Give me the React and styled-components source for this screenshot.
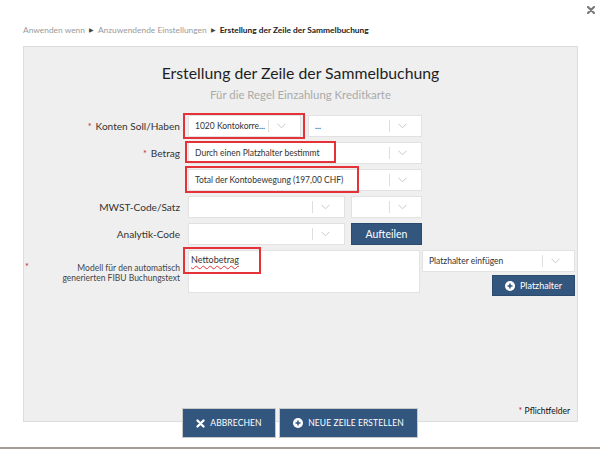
import React from "react";
import styled, { createGlobalStyle } from "styled-components";

const GlobalStyle = createGlobalStyle`
  html, body {
    margin: 0;
    padding: 0;
    background: #fff;
    font-family: Lato, "Open Sans", Arial, sans-serif;
    color: #333;
  }
  * { box-sizing: border-box; }
`;

const Page = styled.div`
  width: 600px;
  height: 449px;
  overflow: hidden;
  display: flex;
  flex-direction: column;
`;

const TopBar = styled.div`
  height: 20px;
  display: flex;
  justify-content: flex-end;
  align-items: center;
  padding-right: 5px;
`;

const Breadcrumb = styled.div`
  height: 20px;
  display: flex;
  align-items: center;
  gap: 4px;
  padding-left: 23px;
  font-size: 8.4px;
  color: #9a9a9a;
`;

const Crumb = styled.span`
  color: ${(p) => (p.$active ? "#222" : "#9a9a9a")};
  font-weight: ${(p) => (p.$active ? 700 : 400)};
`;

const Arrow = styled.span`
  color: #444;
  font-size: 5.5px;
`;

const Panel = styled.div`
  margin: 6px 22px 0 23px;
  height: 376px;
  background: #efefef;
  border: 1px solid #dcdcdc;
  display: flex;
  flex-direction: column;
`;

const Title = styled.h1`
  margin: 15px 0 0;
  font-size: 15.8px;
  line-height: 22px;
  font-weight: 400;
  color: #1e1e1e;
  text-align: center;
`;

const Subtitle = styled.div`
  margin-top: 3px;
  font-size: 11.4px;
  line-height: 16px;
  color: #aaa;
  text-align: center;
`;

const Form = styled.div`
  margin-top: 12px;
  display: grid;
  grid-template-columns: 164px 234px 153px;
  column-gap: 0;
  row-gap: 5px;
`;

const Label = styled.div`
  padding-right: 8px;
  display: flex;
  align-items: center;
  justify-content: flex-end;
  font-size: 10.1px;
  color: #333;
  gap: 4px;
`;

const SmallLabel = styled.div`
  position: relative;
  padding-right: 8px;
  display: flex;
  align-items: center;
  justify-content: flex-end;
  text-align: right;
  font-size: 8.5px;
  line-height: 10px;
  color: #444;
`;

const LeftStar = styled.span`
  position: absolute;
  left: 1px;
  top: 12px;
  color: #c0262d;
  font-size: 9px;
`;

const Star = styled.span`
  color: #c0262d;
  font-size: 9px;
`;

const Field = styled.div`
  position: relative;
  display: flex;
  gap: ${(p) => p.$gap || 0}px;
`;

const SelectBox = styled.div`
  width: ${(p) => (p.$w ? `${p.$w}px` : "100%")};
  height: 22px;
  background: #fff;
  border: 1px solid #e2e2e2;
  display: flex;
  align-items: center;
  font-size: 8.5px;
  color: #333;
`;

const SelectText = styled.span`
  flex: 1;
  padding-left: 6px;
  white-space: nowrap;
  overflow: hidden;
`;

const Indicator = styled.span`
  width: 32px;
  height: 100%;
  display: flex;
  align-items: center;
  gap: 8px;
`;

const Sep = styled.span`
  width: 1px;
  height: 12px;
  background: #dedede;
`;

const Annot = styled.span`
  position: absolute;
  left: ${(p) => p.$l}px;
  top: ${(p) => p.$t}px;
  width: ${(p) => p.$w}px;
  height: ${(p) => p.$h}px;
  border: 2px solid #e53238;
  pointer-events: none;
`;

const BlueButton = styled.button`
  height: ${(p) => p.$h || 22}px;
  width: ${(p) => (p.$w ? `${p.$w}px` : "auto")};
  background: #33567f;
  color: #fff;
  border: 1px solid #2b4a6e;
  font-family: inherit;
  font-size: ${(p) => p.$fs || 10.5}px;
  display: flex;
  align-items: center;
  justify-content: center;
  gap: 5px;
  padding: 0;
`;

const TextArea = styled.div`
  position: relative;
  width: 232px;
  height: 43px;
  background: #fff;
  border: 1px solid #e2e2e2;
  padding: 3px 2px;
  font-size: 9px;
`;

const Squiggle = styled.span`
  text-decoration: underline wavy #e53238;
  text-decoration-thickness: 1px;
  text-underline-offset: 2px;
`;

const SideColumn = styled.div`
  display: flex;
  flex-direction: column;
  align-items: flex-end;
  gap: 3px;
`;

const Required = styled.div`
  margin-top: auto;
  padding: 0 7px 5px 0;
  text-align: right;
  font-size: 8.5px;
  color: #111;
`;

const Footer = styled.div`
  margin-top: -14px;
  display: flex;
  justify-content: center;
  gap: 3px;
`;

const FooterButton = styled.button`
  height: 30px;
  width: ${(p) => p.$w}px;
  background: #33567f;
  color: #fff;
  border: 1px solid #c9c9c9;
  font-family: inherit;
  font-size: 8.5px;
  letter-spacing: 0.1px;
  display: flex;
  align-items: center;
  justify-content: center;
  gap: 5px;
  padding: 0;
`;

const BottomEdge = styled.div`
  margin-top: 9px;
  height: 2px;
  background: #a59d96;
`;

const Chevron = () => (
  <svg width="9" height="6" viewBox="0 0 9 6">
    <polyline points="0.5,0.8 4.5,4.8 8.5,0.8" fill="none" stroke="#c8c8c8" strokeWidth="1" />
  </svg>
);

const CloseIcon = () => (
  <svg width="8" height="8" viewBox="0 0 8 8">
    <path d="M1 1 L7 7 M7 1 L1 7" stroke="#7a7a7a" strokeWidth="2.2" strokeLinecap="round" />
  </svg>
);

const PlusCircle = ({ size = 11, color = "#33567f" }) => (
  <svg width={size} height={size} viewBox="0 0 12 12">
    <circle cx="6" cy="6" r="6" fill="#fff" />
    <path d="M6 3 V9 M3 6 H9" stroke={color} strokeWidth="1.8" />
  </svg>
);

const XIcon = () => (
  <svg width="9" height="9" viewBox="0 0 9 9">
    <path d="M1.5 1.5 L7.5 7.5 M7.5 1.5 L1.5 7.5" stroke="#fff" strokeWidth="2.3" strokeLinecap="round" />
  </svg>
);

const Select = ({ w, children }) => (
  <SelectBox $w={w}>
    <SelectText>{children}</SelectText>
    <Indicator>
      <Sep />
      <Chevron />
    </Indicator>
  </SelectBox>
);

export default function App() {
  return (
    <Page>
      <GlobalStyle />
      <TopBar>
        <CloseIcon />
      </TopBar>
      <Breadcrumb>
        <Crumb>Anwenden wenn</Crumb>
        <Arrow>▶</Arrow>
        <Crumb>Anzuwendende Einstellungen</Crumb>
        <Arrow>▶</Arrow>
        <Crumb $active>Erstellung der Zeile der Sammelbuchung</Crumb>
      </Breadcrumb>
      <Panel>
        <Title>Erstellung der Zeile der Sammelbuchung</Title>
        <Subtitle>Für die Regel Einzahlung Kreditkarte</Subtitle>
        <Form>
          <Label>
            <Star>*</Star>Konten Soll/Haben
          </Label>
          <Field $gap={7}>
            <Select w={113}>1020 Kontokorre...</Select>
            <Select w={114}>...</Select>
            <Annot $l={-5} $t={-2} $w={122} $h={26} />
          </Field>
          <div />

          <Label>
            <Star>*</Star>Betrag
          </Label>
          <Field>
            <Select>Durch einen Platzhalter bestimmt</Select>
            <Annot $l={-3} $t={-1} $w={151} $h={22} />
          </Field>
          <div />

          <Label />
          <Field>
            <Select>Total der Kontobewegung (197,00 CHF)</Select>
            <Annot $l={-3} $t={-3} $w={174} $h={27} />
          </Field>
          <div />

          <Label>MWST-Code/Satz</Label>
          <Field $gap={6}>
            <Select w={157} />
            <Select w={71} />
          </Field>
          <div />

          <Label>Analytik-Code</Label>
          <Field $gap={6}>
            <Select w={157} />
            <BlueButton $w={71}>Aufteilen</BlueButton>
          </Field>
          <div />

          <SmallLabel>
            <LeftStar>*</LeftStar>
            Modell für den automatisch
            <br />
            generierten FIBU Buchungstext
          </SmallLabel>
          <Field>
            <TextArea>
              <Squiggle>Nettobetrag</Squiggle>
            </TextArea>
            <Annot $l={-5} $t={-3} $w={78} $h={27} />
          </Field>
          <SideColumn>
            <Select>Platzhalter einfügen</Select>
            <BlueButton $w={83} $h={21} $fs={9}>
              <PlusCircle size={10} />
              Platzhalter
            </BlueButton>
          </SideColumn>
        </Form>
        <Required>
          <Star>*</Star> Pflichtfelder
        </Required>
      </Panel>
      <Footer>
        <FooterButton $w={94}>
          <XIcon />
          ABBRECHEN
        </FooterButton>
        <FooterButton $w={139}>
          <PlusCircle size={10} />
          NEUE ZEILE ERSTELLEN
        </FooterButton>
      </Footer>
      <BottomEdge />
    </Page>
  );
}
